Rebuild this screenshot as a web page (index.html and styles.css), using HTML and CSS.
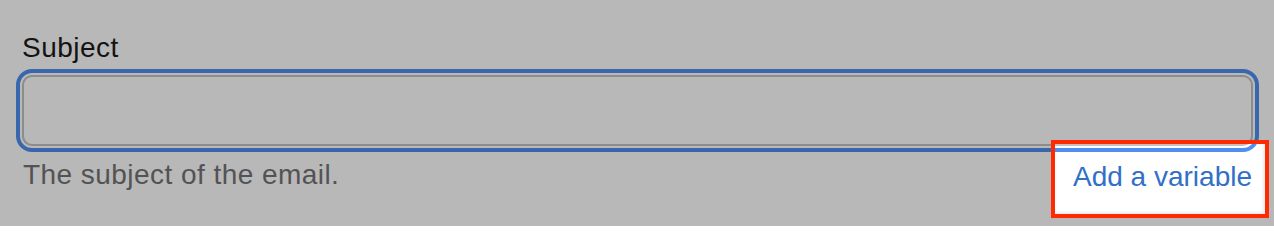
FILE: index.html
```html
<!DOCTYPE html>
<html lang="en">
<head>
<meta charset="utf-8">
<title>Subject field</title>
<link rel="stylesheet" href="styles.css">
</head>
<body>
  <div class="field">
    <label class="field-label" for="subject">Subject</label>
    <input class="field-input" id="subject" type="text">
    <div class="field-footer">
      <span class="field-help">The subject of the email.</span>
      <a class="field-link" href="#">Add a variable<span class="highlight"></span></a>
    </div>
  </div>
</body>
</html>
```

FILE: styles.css
```css
html, body {
  margin: 0;
  padding: 0;
  background: #ffffff;
  overflow: hidden;
}

body {
  font-family: "Liberation Sans", Arial, sans-serif;
  width: 1274px;
  height: 226px;
}

.field {
  display: flex;
  flex-direction: column;
  padding: 32px 21px 0 22px;
}

.field-label {
  font-size: 28px;
  line-height: 32px;
  color: #1b1b1d;
  letter-spacing: 0.5px;
}

.field-input {
  box-sizing: border-box;
  margin: 11px 0 0 0;
  height: 71px;
  width: 100%;
  border: 2px solid #c2c2c2;
  border-radius: 10px;
  background: #ffffff;
  outline: 4px solid #4f8ff0;
  outline-offset: 2px;
  font: inherit;
}

.field-footer {
  display: flex;
  justify-content: space-between;
  align-items: flex-start;
  margin-top: 13px;
}

.field-help {
  font-size: 28px;
  line-height: 32px;
  color: #747476;
  letter-spacing: 0.45px;
  padding-left: 1px;
}

.field-link {
  position: relative;
  font-size: 28px;
  line-height: 32px;
  color: #3270c8;
  text-decoration: none;
  margin-top: 2px;
  margin-right: 1px;
}

.highlight {
  position: absolute;
  top: -21px;
  left: -22px;
  right: -17px;
  bottom: -25px;
  box-sizing: border-box;
  border: 4px solid #ff2a00;
  box-shadow: 0 0 0 3000px rgba(0, 0, 0, 0.28), inset -2px -2px 3px rgba(0, 0, 0, 0.08);
  z-index: 10;
  pointer-events: none;
}
```
